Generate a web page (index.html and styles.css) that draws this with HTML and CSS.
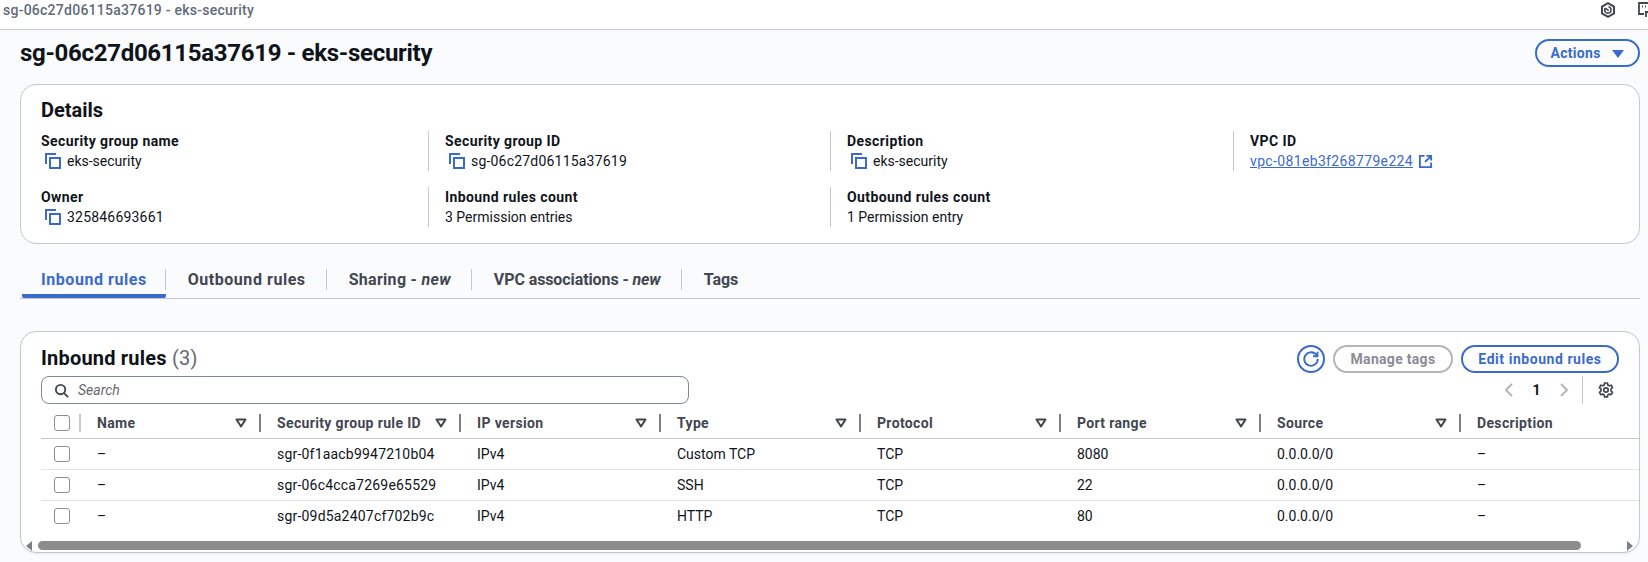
FILE: index.html
```html
<!DOCTYPE html>
<html lang="en">
<head>
  <meta charset="UTF-8">
  <meta name="viewport" content="width=device-width, initial-scale=1.0">
  <title>sg-06c27d06115a37619 - eks-security</title>
  <link rel="stylesheet" href="styles.css">
</head>
<body>
  <svg class="defs">
    <symbol id="copy" viewBox="0 0 16 16"><path d="M1 11V1h10" fill="none" stroke="currentColor" stroke-width="2"/><rect x="5" y="5" width="10" height="10" fill="none" stroke="currentColor" stroke-width="2"/></symbol>
    <symbol id="sort" viewBox="0 0 12 10"><path d="M1.5 1.5h9L6 8.5z" fill="none" stroke="currentColor" stroke-width="2" stroke-linejoin="round"/></symbol>
  </svg>

  <header class="topbar">
    <span class="topbar-title">sg-06c27d06115a37619 - eks-security</span>
    <svg class="topbar-hex" viewBox="0 0 16 16"><path d="M8 1.2l6 3.4v6.8l-6 3.4-6-3.4V4.6z" fill="none" stroke="currentColor" stroke-width="2"/><path d="M5.2 6.2a3.2 3.2 0 1 0 3.2-1.4M5.2 6.2l3.6 2.4" fill="none" stroke="currentColor" stroke-width="1.6"/></svg>
    <svg class="topbar-feedback" viewBox="0 0 16 16"><path d="M6 12H1V1h13v6" fill="none" stroke="currentColor" stroke-width="1.8"/><path d="M4 4.5h1M7 4.5h1M10 4.5h1" stroke="currentColor" stroke-width="2"/><path d="M7 10h7M11 7l3 3-3 3M8 10v5" fill="none" stroke="currentColor" stroke-width="1.8"/></svg>
  </header>

  <main class="page">
    <div class="page-head">
      <h1>sg-06c27d06115a37619 - eks-security</h1>
      <button class="btn btn-actions">Actions <svg class="caret" viewBox="0 0 12 8"><path d="M0 0h12L6 8z" fill="currentColor"/></svg></button>
    </div>

    <section class="card details">
      <h2>Details</h2>
      <div class="details-grid">
        <div class="field">
          <div class="field-label">Security group name</div>
          <div class="field-value"><svg class="copy"><use href="#copy"/></svg>eks-security</div>
        </div>
        <div class="field">
          <div class="field-label">Security group ID</div>
          <div class="field-value"><svg class="copy"><use href="#copy"/></svg><span class="id">sg-06c27d06115a37619</span></div>
        </div>
        <div class="field">
          <div class="field-label">Description</div>
          <div class="field-value"><svg class="copy"><use href="#copy"/></svg>eks-security</div>
        </div>
        <div class="field">
          <div class="field-label">VPC ID</div>
          <div class="field-value"><a class="link id" href="#">vpc-081eb3f268779e224</a>
            <svg class="external" viewBox="0 0 16 16"><path d="M7 2H2v12h12V9" fill="none" stroke="currentColor" stroke-width="2"/><path d="M9 2h5v5M14 2L7.5 8.5" fill="none" stroke="currentColor" stroke-width="2"/></svg>
          </div>
        </div>
        <div class="field">
          <div class="field-label">Owner</div>
          <div class="field-value"><svg class="copy"><use href="#copy"/></svg><span class="id">325846693661</span></div>
        </div>
        <div class="field">
          <div class="field-label">Inbound rules count</div>
          <div class="field-value">3 Permission entries</div>
        </div>
        <div class="field">
          <div class="field-label">Outbound rules count</div>
          <div class="field-value">1 Permission entry</div>
        </div>
      </div>
    </section>

    <nav class="tabs">
      <a class="tab tab-active" href="#"><span>Inbound rules</span></a>
      <a class="tab" href="#"><span>Outbound rules</span></a>
      <a class="tab tab-mid" href="#"><span>Sharing - <em>new</em></span></a>
      <a class="tab tab-flat" href="#"><span>VPC associations - <em>new</em></span></a>
      <a class="tab tab-last" href="#"><span>Tags</span></a>
    </nav>

    <section class="card rules">
      <div class="rules-head">
        <h2>Inbound rules <span class="count">(3)</span></h2>
        <div class="rules-actions">
          <button class="btn-refresh" aria-label="Refresh">
            <svg viewBox="0 0 16 16"><path d="M12.6 5.2A5.4 5.4 0 1 0 13.4 8" fill="none" stroke="currentColor" stroke-width="1.5"/><path d="M9.6 5.8h3.6V2.2" fill="none" stroke="currentColor" stroke-width="1.5"/></svg>
          </button>
          <button class="btn btn-disabled">Manage tags</button>
          <button class="btn btn-edit">Edit inbound rules</button>
        </div>
      </div>

      <div class="filter-row">
        <div class="search">
          <svg viewBox="0 0 16 16"><circle cx="7" cy="7" r="5" fill="none" stroke="currentColor" stroke-width="2"/><path d="M11 11l4 4" stroke="currentColor" stroke-width="2"/></svg>
          <span>Search</span>
        </div>
        <div class="pager">
          <svg viewBox="0 0 10 16"><path d="M8 2L2 8l6 6" fill="none" stroke="currentColor" stroke-width="2"/></svg>
          <b>1</b>
          <svg viewBox="0 0 10 16"><path d="M2 2l6 6-6 6" fill="none" stroke="currentColor" stroke-width="2"/></svg>
          <span class="pager-gear">
            <svg viewBox="0 0 16 16"><path d="M6.6 1h2.8l.4 2 1.4.8 2-.6 1.3 2.4-1.5 1.4v1.9l1.5 1.4-1.3 2.4-2-.6-1.4.8-.4 2H6.6l-.4-2-1.4-.8-2 .6-1.3-2.4 1.5-1.4V7.1L1.5 5.6l1.3-2.4 2 .6 1.4-.8z" fill="none" stroke="currentColor" stroke-width="1.7" stroke-linejoin="round"/><circle cx="8" cy="8" r="2.2" fill="none" stroke="currentColor" stroke-width="1.7"/></svg>
          </span>
        </div>
      </div>

      <table class="rules-table">
        <thead>
          <tr>
            <th class="col-check"><div class="th-inner"><span class="check"></span></div></th>
            <th class="col-name"><div class="th-inner">Name<svg class="sort"><use href="#sort"/></svg></div></th>
            <th><div class="th-inner">Security group rule ID<svg class="sort"><use href="#sort"/></svg></div></th>
            <th><div class="th-inner">IP version<svg class="sort"><use href="#sort"/></svg></div></th>
            <th><div class="th-inner">Type<svg class="sort"><use href="#sort"/></svg></div></th>
            <th><div class="th-inner">Protocol<svg class="sort"><use href="#sort"/></svg></div></th>
            <th><div class="th-inner">Port range<svg class="sort"><use href="#sort"/></svg></div></th>
            <th><div class="th-inner">Source<svg class="sort"><use href="#sort"/></svg></div></th>
            <th class="col-desc"><div class="th-inner th-plain">Description</div></th>
          </tr>
        </thead>
        <tbody>
          <tr>
            <td class="col-check"><span class="check"></span></td>
            <td>–</td><td class="id">sgr-0f1aacb9947210b04</td><td>IPv4</td><td>Custom TCP</td><td>TCP</td><td>8080</td><td>0.0.0.0/0</td><td>–</td>
          </tr>
          <tr>
            <td class="col-check"><span class="check"></span></td>
            <td>–</td><td class="id">sgr-06c4cca7269e65529</td><td>IPv4</td><td>SSH</td><td>TCP</td><td>22</td><td>0.0.0.0/0</td><td>–</td>
          </tr>
          <tr>
            <td class="col-check"><span class="check"></span></td>
            <td>–</td><td class="id">sgr-09d5a2407cf702b9c</td><td>IPv4</td><td>HTTP</td><td>TCP</td><td>80</td><td>0.0.0.0/0</td><td>–</td>
          </tr>
        </tbody>
      </table>

      <div class="scrollbar">
        <svg class="scroll-arrow" viewBox="0 0 6 10"><path d="M6 0v10L0 5z" fill="currentColor"/></svg>
        <div class="scroll-thumb"></div>
        <svg class="scroll-arrow" viewBox="0 0 6 10"><path d="M0 0v10l6-5z" fill="currentColor"/></svg>
      </div>
    </section>
  </main>
</body>
</html>
```

FILE: styles.css
```css
* {
  box-sizing: border-box;
}

html, body {
  height: 100%;
}

body {
  margin: 0;
  font-family: 'Roboto', 'Liberation Sans', sans-serif;
  font-size: 14px;
  line-height: 20px;
  color: #0f141a;
  background-color: #fafbfd;
  overflow: hidden;
}

.defs {
  display: none;
}

button {
  font: inherit;
}

h1, h2 {
  margin: 0;
}

.id {
  letter-spacing: 0.2px;
}

/* top strip */
.topbar {
  height: 30px;
  padding: 0 0 10px 3px;
  display: flex;
  align-items: center;
  background-color: #fff;
  border-bottom: 1px solid #c6c6cd;
  color: #424650;
}

.topbar-title {
  font-weight: 500;
  font-size: 14px;
  letter-spacing: 0.25px;
  color: #5f6b7a;
  flex: 1;
}

.topbar-hex {
  width: 16px;
  height: 16px;
  margin-right: 22px;
}

.topbar-feedback {
  width: 16px;
  height: 16px;
  flex: none;
  margin-right: -6px;
}

.page {
  padding: 0 8px 0 20px;
}

.page-head {
  display: flex;
  justify-content: space-between;
  align-items: center;
  padding: 9px 0 17px;
}

h1 {
  font-size: 24px;
  line-height: 28px;
  font-weight: 700;
  letter-spacing: -0.3px;
}

.btn {
  height: 28px;
  padding: 0;
  border: 2px solid #3a6bcb;
  border-radius: 20px;
  background-color: #fff;
  color: #3a6bcb;
  font-weight: 700;
  font-size: 14px;
  line-height: 22px;
  letter-spacing: 0.3px;
}

.btn-actions {
  width: 105px;
  background-color: transparent;
}

.btn-edit {
  width: 158px;
  letter-spacing: 0.55px;
}

.btn-disabled {
  width: 120px;
  border-color: #b4b4bb;
  color: #8c8c94;
}

.caret {
  width: 12px;
  height: 8px;
  margin-left: 8px;
}

.card {
  background-color: #fff;
  border: 1px solid #c6c6cd;
  border-radius: 16px;
}

/* details */
.details {
  height: 160px;
  padding: 14px 20px 0;
}

.details h2 {
  font-size: 20px;
  line-height: 22px;
  font-weight: 700;
}

.details-grid {
  display: grid;
  grid-template-columns: 387px 402px 403px 1fr;
  row-gap: 16px;
  margin-top: 10px;
}

.field {
  height: 40px;
  padding-left: 16px;
  border-left: 1px solid #c6c6cd;
}

.field:nth-child(4n + 1) {
  padding-left: 0;
  border-left: none;
}

.field-label {
  font-weight: 700;
  letter-spacing: 0.4px;
}

.field-value {
  display: flex;
  align-items: center;
  gap: 6px;
}

.copy {
  width: 16px;
  height: 16px;
  margin-left: 4px;
  color: #3a6bcb;
  flex: none;
}

.link {
  color: #3a6bcb;
  letter-spacing: 0.35px;
}

.external {
  width: 15px;
  height: 15px;
  color: #3a6bcb;
  margin-left: -1px;
}

/* tabs */
.tabs {
  display: flex;
  height: 55px;
  padding-top: 25px;
  border-bottom: 1px solid #c6c6cd;
}

.tab {
  display: block;
  height: 29px;
  color: #424650;
  text-decoration: none;
  font-size: 16px;
  font-weight: 700;
  letter-spacing: 0.55px;
}

.tab-mid {
  letter-spacing: 0.3px;
}

.tab-flat {
  letter-spacing: -0.1px;
}

.tab span {
  display: block;
  height: 21px;
  padding: 0 20px 0 22px;
  line-height: 21px;
  border-right: 1px solid #c6c6cd;
}

.tab-last span {
  border-right: none;
  letter-spacing: 0;
}

.tab-active {
  color: #3a6bcb;
  border-bottom: 4px solid #3a6bcb;
  border-radius: 0 0 2px 2px;
  margin-left: 2px;
}

.tab-active span {
  padding: 0 18px 0 19px;
}

/* rules table */
.rules {
  height: 222px;
  margin-top: 32px;
  padding: 12px 0 0 20px;
  overflow: hidden;
  box-shadow: 0 2px 2px rgba(0, 0, 0, 0.04);
}

.rules-head {
  display: flex;
  justify-content: space-between;
  align-items: center;
  padding-right: 20px;
  height: 29px;
}

.rules-head h2 {
  font-size: 20px;
  line-height: 24px;
  font-weight: 700;
  letter-spacing: 0.2px;
  padding-bottom: 2px;
}

.count {
  font-weight: 400;
  color: #656871;
}

.rules-actions {
  display: flex;
  align-items: center;
  gap: 8px;
}

.btn-refresh {
  width: 28px;
  height: 28px;
  padding: 0;
  border: 2px solid #3a6bcb;
  border-radius: 50%;
  background-color: #fff;
  color: #3a6bcb;
  display: flex;
  align-items: center;
  justify-content: center;
}

.btn-refresh svg {
  width: 20px;
  height: 20px;
}

.filter-row {
  display: flex;
  justify-content: space-between;
  margin-top: 3px;
  padding-right: 25px;
  height: 28px;
}

.search {
  width: 648px;
  height: 28px;
  padding-left: 12px;
  display: flex;
  align-items: center;
  gap: 9px;
  border: 1px solid #7d8998;
  border-radius: 8px;
  color: #424650;
}

.search svg {
  width: 15px;
  height: 15px;
}

.search span {
  font-style: italic;
  color: #656871;
}

.pager {
  display: flex;
  align-items: center;
  color: #b4b4bb;
}

.pager > svg {
  width: 10px;
  height: 16px;
}

.pager b {
  width: 45px;
  text-align: center;
  color: #0f141a;
}

.pager-gear {
  display: flex;
  align-items: center;
  height: 28px;
  margin-left: 13px;
  padding-left: 15px;
  border-left: 1px solid #c6c6cd;
  color: #424650;
}

.pager-gear svg {
  width: 16px;
  height: 16px;
}

.rules-table {
  width: 1598px;
  margin-top: 4px;
  border-collapse: collapse;
  table-layout: fixed;
}

.rules-table th {
  width: 200px;
  height: 30px;
  padding: 0;
  text-align: left;
  font-weight: 700;
  letter-spacing: 0.35px;
  color: #424650;
  border-bottom: 1px solid #c6c6cd;
}

.rules-table th.col-check {
  width: 40px;
}

.rules-table th.col-name {
  width: 180px;
}

.rules-table th.col-desc {
  width: 178px;
}

.th-inner {
  display: flex;
  align-items: center;
  justify-content: space-between;
  height: 18px;
  padding: 0 12px 0 16px;
  border-right: 2px solid #7d8087;
}

.col-check .th-inner {
  padding: 0 0 0 13px;
  border-right-color: #c6c6cd;
}

.col-name .th-inner {
  padding-left: 16px;
}

.th-plain {
  border-right: none;
}

.sort {
  width: 12px;
  height: 10px;
  color: #424650;
}

.rules-table td {
  height: 31px;
  padding: 0 0 0 16px;
  border-bottom: 1px solid #e3e3e7;
}

.rules-table tr:last-child td {
  border-bottom: none;
}

.rules-table td.col-check {
  padding-left: 13px;
}

.check {
  display: block;
  width: 16px;
  height: 16px;
  border: 1px solid #8c8c94;
  border-radius: 3px;
  background-color: #fff;
}

.scrollbar {
  display: flex;
  align-items: center;
  height: 9px;
  margin: 10px 0 0 -15px;
}

.scroll-arrow {
  width: 6px;
  height: 10px;
  color: #7d8087;
  flex: none;
}

.scroll-thumb {
  width: 1543px;
  height: 9px;
  margin: 0 46px 0 6px;
  border-radius: 5px;
  background-color: #8c8c8c;
}
```
